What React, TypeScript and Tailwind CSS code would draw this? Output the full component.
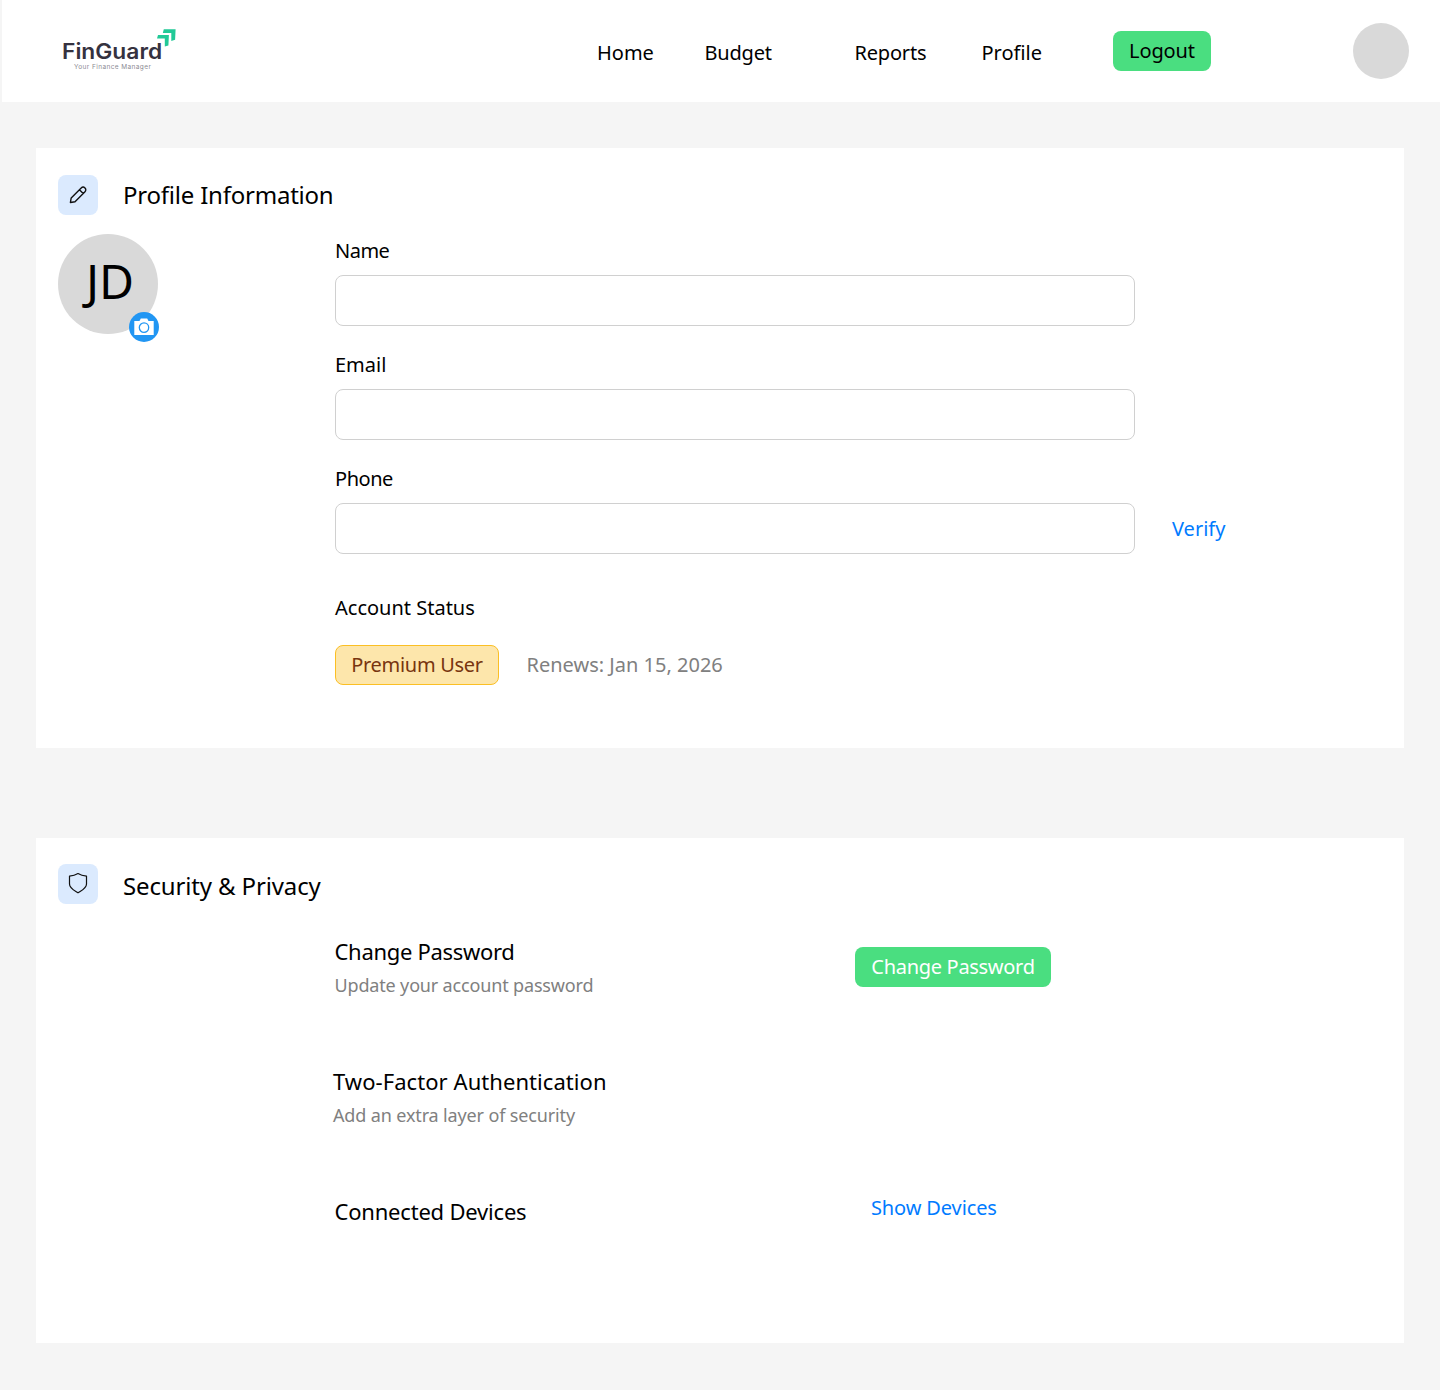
import type { ReactNode } from "react";

function NavLink({ children, className }: { children: ReactNode; className: string }) {
  return (
    <a href="#" className={`mt-[39px] block h-7 whitespace-nowrap text-xl leading-7 ${className}`}>
      {children}
    </a>
  );
}

function Logo() {
  return (
    <div className="relative ml-[60px] mt-[28px] h-[46px] w-[116px] whitespace-nowrap font-['Inter',sans-serif]">
      <div className="origin-left scale-x-[1.085] pt-[10px] text-[21px] font-semibold leading-[28px] text-[#35323f]">FinGuard</div>
      <div className="-mt-[3px] pl-[12px] text-[6.5px] leading-[9px] tracking-[0.4px] text-[#8b8b93]">Your Finance Manager</div>
      <svg className="absolute left-[94px] top-0 h-[20px] w-[20px]" viewBox="0 0 20 20" fill="#22c997">
        <path d="M7.8 1.2H19.6L19.1 11.8L15.3 12.9V4.9H6.8Z" />
        <path d="M2 6.9H12.9L12.4 17.6L8.8 18.6V10.6H1Z" />
      </svg>
    </div>
  );
}

function SectionTitle({ icon, children, className }: { icon: ReactNode; children: ReactNode; className: string }) {
  return (
    <div className="flex">
      <div className="flex size-10 items-center justify-center rounded-lg bg-[#dbeafe]">{icon}</div>
      <h2 className={`ml-[25px] whitespace-nowrap text-2xl leading-8 ${className}`}>{children}</h2>
    </div>
  );
}

function PencilIcon() {
  return (
    <svg className="size-5" viewBox="0 0 20 20" fill="none" stroke="#111" strokeWidth="1.4" strokeLinejoin="round" strokeLinecap="round">
      <path d="M2.4 17.5L3.2 12.9L13.2 2.9A2.55 2.55 0 0 1 17 6.7L7 16.7ZM11.4 4.7L15.2 8.5" />
    </svg>
  );
}

function ShieldIcon() {
  return (
    <svg className="-mt-[2px] h-6 w-6" viewBox="0 0 24 24" fill="none" stroke="#111" strokeWidth="1.2" strokeLinejoin="round">
      <path d="M12 2.5C14.5 4 17.5 4.8 20.5 5.1V13C20.5 17.3 16.3 19 12 21.8C7.7 19 3.5 17.3 3.5 13V5.1C6.5 4.8 9.5 4 12 2.5Z" />
    </svg>
  );
}

function CameraBadge() {
  return (
    <div className="absolute left-[71px] top-[78px] flex size-[30px] items-center justify-center rounded-full bg-[#2196f3]">
      <svg className="h-[18px] w-5" viewBox="0 0 20 18">
        <path d="M0.3 3H5.5L6.8 0.5H13.2L14.5 3H19.7V17H0.3Z" fill="white" />
        <circle cx="10" cy="9.6" r="4.7" fill="none" stroke="#2196f3" strokeWidth="1.3" />
      </svg>
    </div>
  );
}

function Field({ label, labelClass, action }: { label: string; labelClass: string; action?: string }) {
  return (
    <div className="mb-[26px]">
      <label className={`block h-[38px] text-xl leading-7 ${labelClass}`}>{label}</label>
      <div className="-mb-[1px] flex items-center">
        <input aria-label={label} className="h-[51px] w-[800px] rounded-lg border border-[#d0d0d0] bg-white px-4 text-xl outline-none" />
        {action && <a href="#" className="ml-[37px] text-xl leading-7 text-[#007bff]">{action}</a>}
      </div>
    </div>
  );
}

export default function App() {
  return (
    <div className="h-[1390px] w-[1440px] overflow-hidden bg-[#f5f5f5] font-['Noto_Sans',sans-serif] text-black">
      <header className="ml-[2px] flex h-[102px] bg-white">
        <Logo />
        <nav className="flex">
          <NavLink className="ml-[419px] w-[107.5px]">Home</NavLink>
          <NavLink className="w-[150px] tracking-[-0.2px]">Budget</NavLink>
          <NavLink className="w-[127px] tracking-[-0.2px]">Reports</NavLink>
          <NavLink className="w-[131.5px]">Profile</NavLink>
        </nav>
        <button className="mt-[31px] h-10 w-[98px] rounded-lg bg-[#4ade80] text-xl tracking-[-0.1px]">Logout</button>
        <div className="ml-[142px] mt-[23px] size-14 rounded-full bg-[#d9d9d9]" />
      </header>

      <main className="px-9 pt-[46px]">
        <section className="h-[600px] bg-white pl-[22px] pt-[27px]">
          <SectionTitle icon={<PencilIcon />} className="mt-[4px] tracking-[-0.22px]">Profile Information</SectionTitle>
          <div className="flex">
            <div className="relative mt-[19px] size-[100px] rounded-full bg-[#d9d9d9]">
              <div className="pl-[28px] pt-[17px] text-5xl leading-[60px]">JD</div>
              <CameraBadge />
            </div>
            <div className="ml-[177px] mt-[22px]">
              <Field label="Name" labelClass="tracking-[-0.5px]" />
              <Field label="Email" labelClass="" />
              <Field label="Phone" labelClass="tracking-[-0.45px]" action="Verify" />
              <div className="mt-[41px] text-xl leading-7">Account Status</div>
              <div className="mt-[23px] flex items-center text-xl leading-7">
                <span className="flex h-10 w-[164px] items-center justify-center whitespace-nowrap rounded-lg border border-[#fbbf24] bg-[#fde6ab] tracking-[-0.3px] text-[#78350f]">Premium User</span>
                <span className="ml-[27.5px] text-[#808080]">Renews: Jan 15, 2026</span>
              </div>
            </div>
          </div>
        </section>

        <section className="mt-[90px] h-[505px] bg-white pl-[22px] pt-[26px]">
          <SectionTitle icon={<ShieldIcon />} className="mt-[6px] tracking-[-0.14px]">Security &amp; Privacy</SectionTitle>
          <div className="ml-[275px] mt-[30px] whitespace-nowrap">
            <div className="flex h-[130px]">
              <div className="w-[522px] pl-[1.5px]">
                <h3 className="text-[22px] leading-[34px] tracking-[-0.3px]">Change Password</h3>
                <p className="mt-[1px] text-lg leading-8 tracking-[-0.16px] text-[#808080]">Update your account password</p>
              </div>
              <button className="mt-[13px] h-10 w-[196px] rounded-lg bg-[#4ade80] text-xl tracking-[-0.3px] text-white">Change Password</button>
            </div>
            <div className="h-[130px]">
              <h3 className="text-[22px] leading-[34px] tracking-[0.06px]">Two-Factor Authentication</h3>
              <p className="mt-[1px] text-lg leading-8 tracking-[-0.14px] text-[#808080]">Add an extra layer of security</p>
            </div>
            <div className="flex">
              <h3 className="w-[538px] pl-[1.5px] text-[22px] leading-[34px] tracking-[-0.2px]">Connected Devices</h3>
              <a href="#" className="text-xl leading-7 tracking-[-0.12px] text-[#007bff]">Show Devices</a>
            </div>
          </div>
        </section>
      </main>
    </div>
  );
}
